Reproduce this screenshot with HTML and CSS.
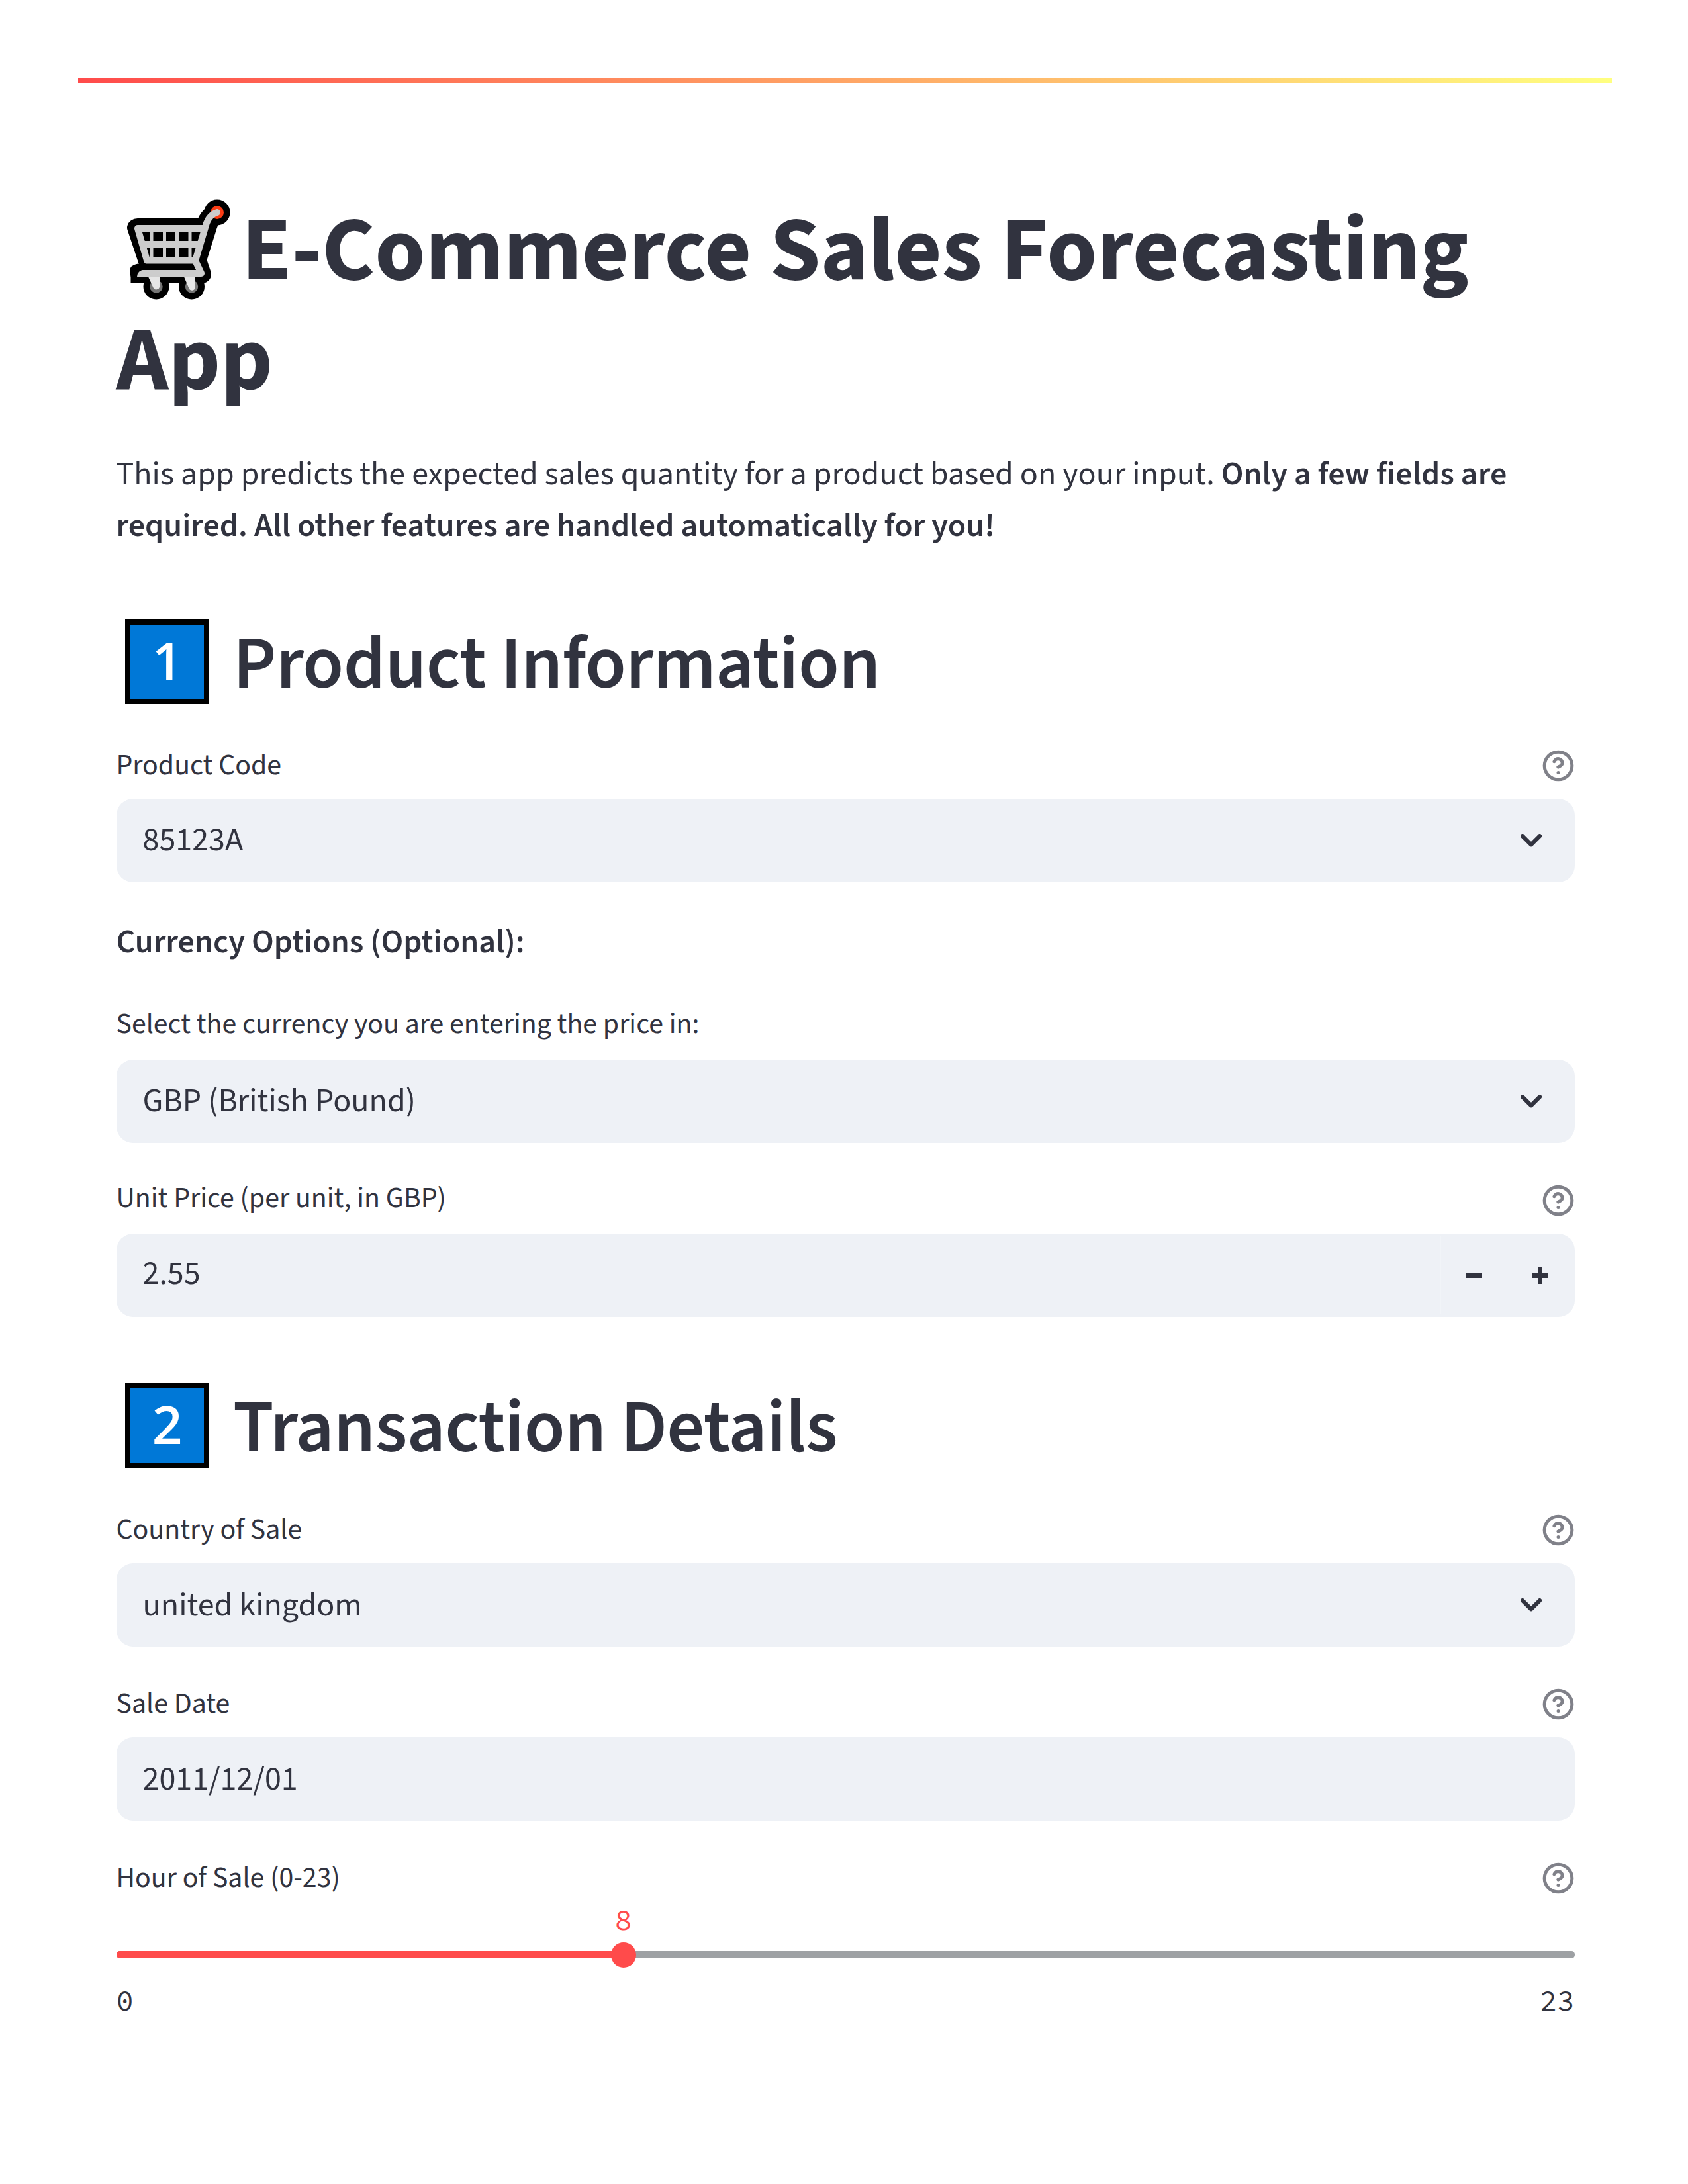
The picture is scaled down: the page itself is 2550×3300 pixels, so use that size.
FILE: index.html
```html
<!DOCTYPE html>
<html lang="en">
<head>
<meta charset="utf-8">
<title>E-Commerce Sales Forecasting App</title>
<link rel="stylesheet" href="styles.css">
</head>
<body>
<svg class="defs" aria-hidden="true">
  <symbol id="help" viewBox="0 0 24 24"><g fill="none" stroke="currentColor" stroke-width="2.4" stroke-linecap="round" stroke-linejoin="round"><circle cx="12" cy="12" r="10"/><path d="M9.090 9a3 3 0 0 1 5.830 1c0 2-3 3-3 3"/><path d="M12 17h.01"/></g></symbol>
  <symbol id="chevron" viewBox="0 0 32 20"><path d="M3 3.2 16 16.2 29 3.2" fill="none" stroke="currentColor" stroke-width="6.2" stroke-linecap="round" stroke-linejoin="round"/></symbol>
</svg>
<div class="decoration"></div>
<main class="content">
  <h1 class="title"><svg class="cart" viewBox="0 0 200 190" aria-hidden="true">
    <g stroke="#000" stroke-width="20" stroke-linejoin="round" fill="#000">
      <circle cx="158" cy="41" r="9.5"/>
      <path d="M38 60H136Q142 41 158 37L165 41Q152 48 148 62L132 113 139 134Q139 138 134 138H38L36 130Q36 128 48 128L50 118 32 64Q33 60 38 60Z"/>
      <path d="M39 128H60V147.500H27.500V136Q28 124 39 120Z" stroke="none"/>
      <circle cx="66" cy="153" r="9.500"/><circle cx="119.500" cy="153" r="9.500"/>
    </g>
    <circle cx="158" cy="41" r="10" fill="#fa3c14"/>
    <circle cx="66" cy="153" r="9.700" fill="#767676"/><circle cx="119.500" cy="153" r="9.700" fill="#767676"/>
    <path d="M53 136H71V153A5 5 0 0 1 61.500 154.500ZM107 136H125V153A5 5 0 0 1 115 154.500Z" fill="#e6e6e6"/>
    <path d="M158 41Q147 44 142 57L125 114 134 133H46" fill="none" stroke="#ccc" stroke-width="10" stroke-linecap="round" stroke-linejoin="round"/>
    <path d="M37 138Q38 128 48 128L60 138Z" fill="#ccc"/>
    <path d="M137 65H38L52 113.500H125M45 89H132" fill="none" stroke="#ccc" stroke-width="10" stroke-linejoin="round"/>
    <path d="M59 64V114M78.500 64V114M97.500 64V114M117 64V114" stroke="#ccc" stroke-width="5"/>
  </svg>E-Commerce Sales Forecasting<br>App</h1>
  <p class="intro">This app predicts the expected sales quantity for a product based on your input. <strong>Only a few fields are<br>required. All other features are handled automatically for you!</strong></p>

  <h2 class="heading"><span class="keycap">1</span><span class="text">Product Information</span></h2>
  <div class="field">
    <div class="label"><span class="text">Product Code</span><svg class="help"><use href="#help"/></svg></div>
    <div class="control"><span>85123A</span><svg class="chevron"><use href="#chevron"/></svg></div>
  </div>
  <p class="subhead"><strong>Currency Options (Optional):</strong></p>
  <div class="field field-plain">
    <div class="label"><span class="text">Select the currency you are entering the price in:</span></div>
    <div class="control"><span>GBP (British Pound)</span><svg class="chevron"><use href="#chevron"/></svg></div>
  </div>
  <div class="field field-number">
    <div class="label"><span class="text">Unit Price (per unit, in GBP)</span><svg class="help"><use href="#help"/></svg></div>
    <div class="control"><span class="number">2.55</span>
      <div class="steppers"><span class="step minus"></span><span class="step plus"></span></div>
    </div>
  </div>

  <h2 class="heading second"><span class="keycap">2</span><span class="text">Transaction Details</span></h2>
  <div class="field field-country">
    <div class="label"><span class="text">Country of Sale</span><svg class="help"><use href="#help"/></svg></div>
    <div class="control"><span>united kingdom</span><svg class="chevron"><use href="#chevron"/></svg></div>
  </div>
  <div class="field field-date">
    <div class="label"><span class="text">Sale Date</span><svg class="help"><use href="#help"/></svg></div>
    <div class="control"><span>2011/12/01</span></div>
  </div>
  <div class="field field-slider">
    <div class="label"><span class="text">Hour of Sale (0-23)</span><svg class="help"><use href="#help"/></svg></div>
    <div class="slider">
      <div class="track"><div class="fill" style="width:34.78%"></div><div class="thumb" style="left:34.78%"><span class="value">8</span></div></div>
      <div class="ticks"><span>0</span><span>23</span></div>
    </div>
  </div>
</main>
</body>
</html>
```
FILE: styles.css
```css
* { box-sizing: border-box; }
body {
  margin: 0;
  min-height: 3300px;
  padding-top: 118px;
  background: #fff;
  color: #31333f;
  font-family: "Source Sans 3", "Noto Sans CJK SC", "Noto Sans", sans-serif;
  font-size: 50.080px;
}
.defs { position: absolute; width: 0; height: 0; }
.decoration {
  height: 7px;
  margin: 0 115px 0 118px;
  background: linear-gradient(to right, #ff4b4b, #ffff80);
}
.content { width: 2203px; margin-left: 175.500px; }
h1, h2, p { margin: 0; white-space: nowrap; }
.title { margin-top: 163px; font-size: 137.700px; line-height: 165.500px; font-weight: 700; }
.cart { width: 200px; height: 190px; margin: -8px -5px -48px -5.500px; vertical-align: baseline; }
.intro, .subhead { line-height: 78px; }
.intro { margin-top: 50px; }
strong { font-weight: 600; }
.heading { display: flex; align-items: flex-start; height: 137px; margin-top: 92.500px; font-size: 112.680px; line-height: 135px; font-weight: 600; letter-spacing: -.005em; }
.heading .text { margin-top: 10px; }
.keycap {
  width: 127px; height: 128px; margin: 9px 36px 0 13.500px;
  border: 8.500px solid #000; background: #0078d7; color: #fff;
  font: 600 80px/105px "Open Sans", sans-serif; text-align: center;
  letter-spacing: 0;
}
.field { margin-top: 57.500px; }
.label { display: flex; justify-content: space-between; align-items: center; height: 63px; font-size: 43.850px; line-height: 63px; }
.label .text { margin-top: 8px; }
.help { width: 50px; height: 50px; margin: 9px -.5px 0 0; color: #808189; }
.control {
  display: flex; justify-content: space-between; align-items: center;
  height: 125.500px; margin-top: 23px; padding-left: 40px;
  border-radius: 25px; background: #eef1f6; overflow: hidden;
}
.control .number { margin-bottom: 5px; }
.chevron { width: 32px; height: 20px; margin-right: 49.500px; }
.subhead { margin-top: 52px; }
.field-plain { margin-top: 49.500px; }
.field-plain .control, .field-number .control { margin-top: 26px; }
.field-number { margin-top: 48.700px; }
.field-number .help { margin-top: 15px; }
.steppers { display: flex; height: 118px; }
.step { width: 100px; position: relative; border-left: 1px solid #f1f4f8; }
.step + .step { width: 103px; }
.minus::before, .plus::before, .plus::after { content: ""; position: absolute; left: 37px; top: 56px; width: 25px; height: 7px; background: #31333f; }
.plus::after { left: 46px; top: 47px; width: 7px; height: 25px; }
.second { margin-top: 91.100px; }
.field-country { margin-top: 58.500px; }
.field-date, .field-slider { margin-top: 51.500px; }
.track { position: relative; height: 11px; margin-top: 83px; border-radius: 5px; background: #9ea1a4; }
.fill { height: 11px; border-radius: 5px 0 0 5px; background: #ff4b4b; }
.thumb { position: absolute; top: 50%; width: 38px; height: 38px; margin: -19px; border-radius: 50%; background: #ff4b4b; }
.value { position: absolute; left: 0; width: 100%; bottom: 42px; text-align: center; color: #ff4b4b; }
.value, .ticks { font-family: "Source Code Pro", "Liberation Mono", monospace; font-size: 43.850px; line-height: 60px; }
.ticks { display: flex; justify-content: space-between; margin-top: 34px; }
```
